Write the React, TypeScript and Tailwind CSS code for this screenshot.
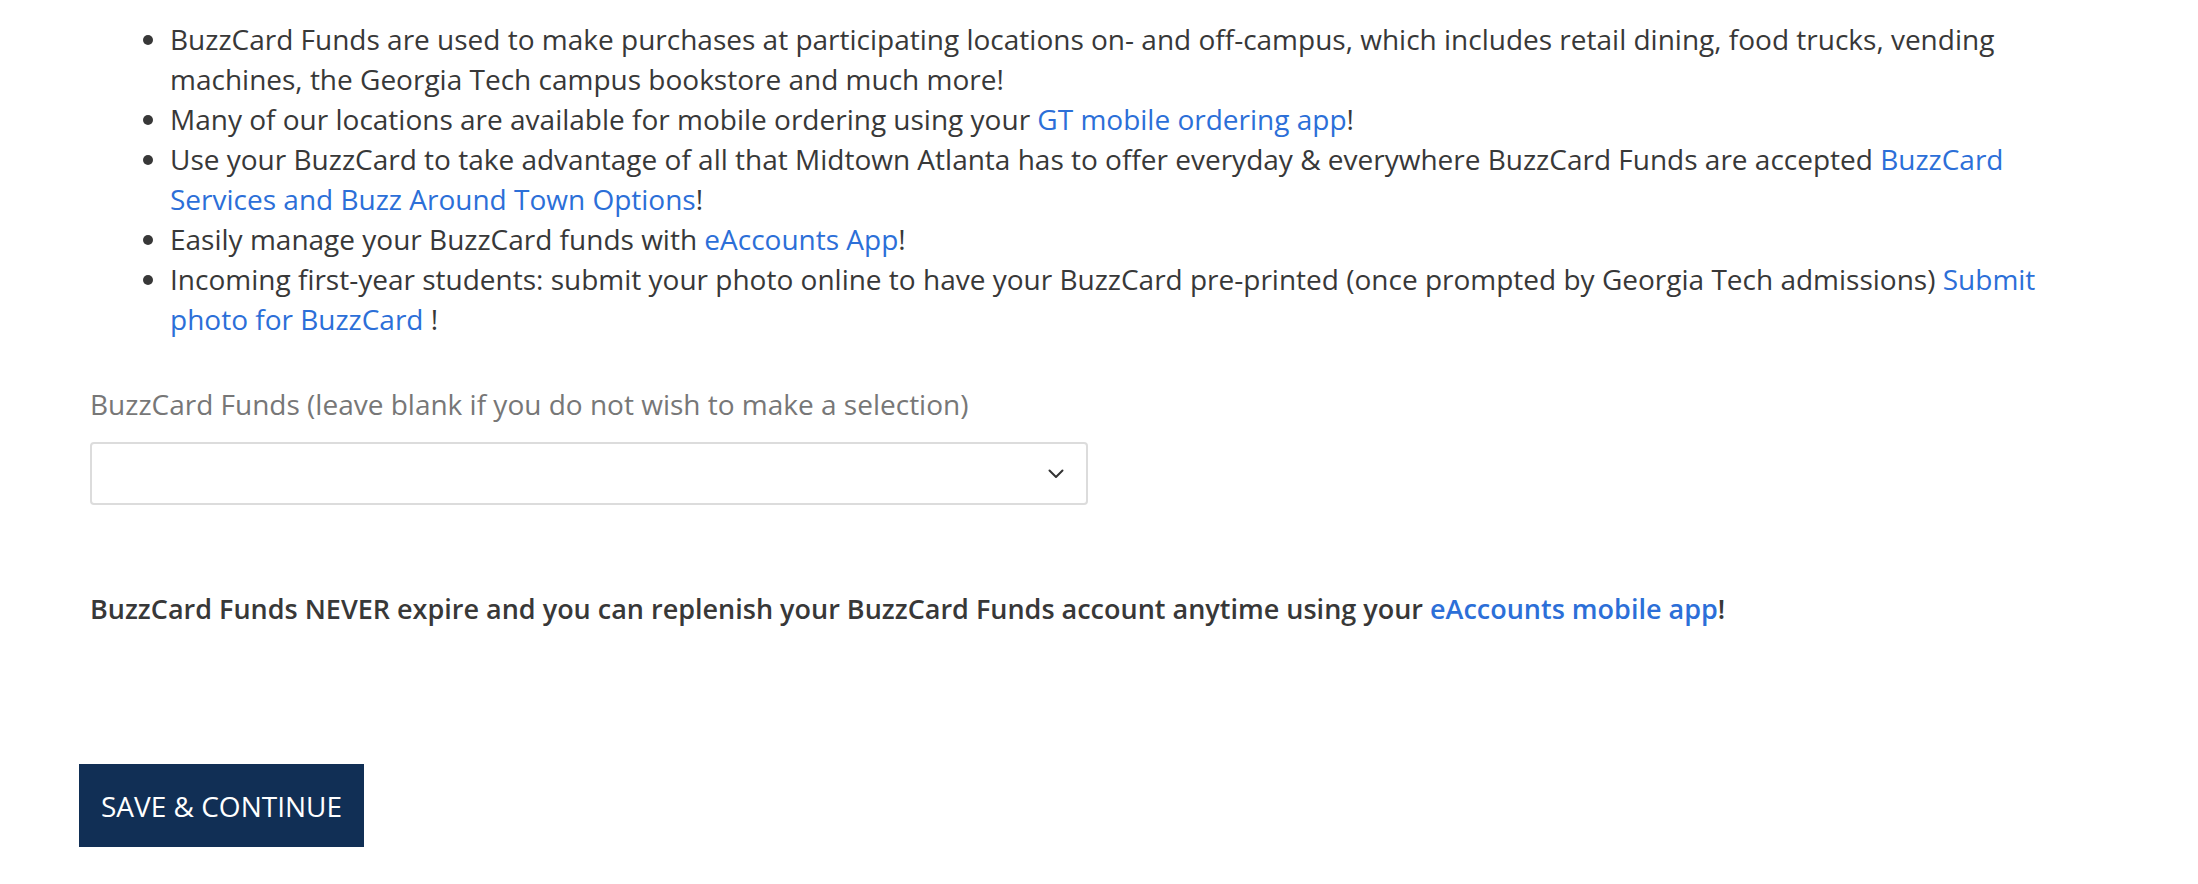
import React from "react";

const Link = ({ children }: { children: React.ReactNode }) => (
  <a href="#" className="text-[#2c6fd8] no-underline">
    {children}
  </a>
);

export default function App() {
  return (
    <div
      className="bg-white min-h-[884px] w-[2198px] pl-[90px] pr-[123px] pt-[19px] text-[#383838]"
      style={{ fontFamily: '"Open Sans", sans-serif' }}
    >
      <ul className="list-disc pl-[80px] text-[28px] leading-[40px]">
        <li>
          BuzzCard Funds are used to make purchases at participating locations on- and off-campus, which includes retail
          dining, food trucks, vending machines, the Georgia Tech campus bookstore and much more!
        </li>
        <li>
          Many of our locations are available for mobile ordering using your <Link>GT mobile ordering app</Link>!
        </li>
        <li>
          Use your BuzzCard to take advantage of all that Midtown Atlanta has to offer everyday &amp; everywhere BuzzCard
          Funds are accepted <Link>BuzzCard Services and Buzz Around Town Options</Link>!
        </li>
        <li>
          Easily manage your BuzzCard funds with <Link>eAccounts App</Link>!
        </li>
        <li>
          Incoming first-year students: submit your photo online to have your BuzzCard pre-printed (once prompted by
          Georgia Tech admissions) <Link>Submit photo for BuzzCard</Link> !
        </li>
      </ul>

      <div className="mt-[45px] text-[28px] leading-[40px] text-[#777777]">
        BuzzCard Funds (leave blank if you do not wish to make a selection)
      </div>
      <div className="mt-[18px] flex h-[63px] w-[998px] items-center justify-end rounded-[4px] border-2 border-[#dcdcdc] bg-white pr-[22px]">
        <svg width="16" height="10" viewBox="0 0 16 10" fill="none">
          <path d="M1.5 1.5L8 8L14.5 1.5" stroke="#333" strokeWidth="2" strokeLinecap="round" strokeLinejoin="round" />
        </svg>
      </div>

      <p className="mt-[84px] text-[27px] font-semibold leading-[40px] text-[#383838]">
        BuzzCard Funds NEVER expire and you can replenish your BuzzCard Funds account anytime using your{" "}
        <Link>eAccounts mobile app</Link>!
      </p>

      <button className="-ml-[11px] mt-[135px] flex h-[83px] w-[285px] items-center justify-center bg-[#112f55] text-[28px] text-white">
        SAVE &amp; CONTINUE
      </button>
    </div>
  );
}
